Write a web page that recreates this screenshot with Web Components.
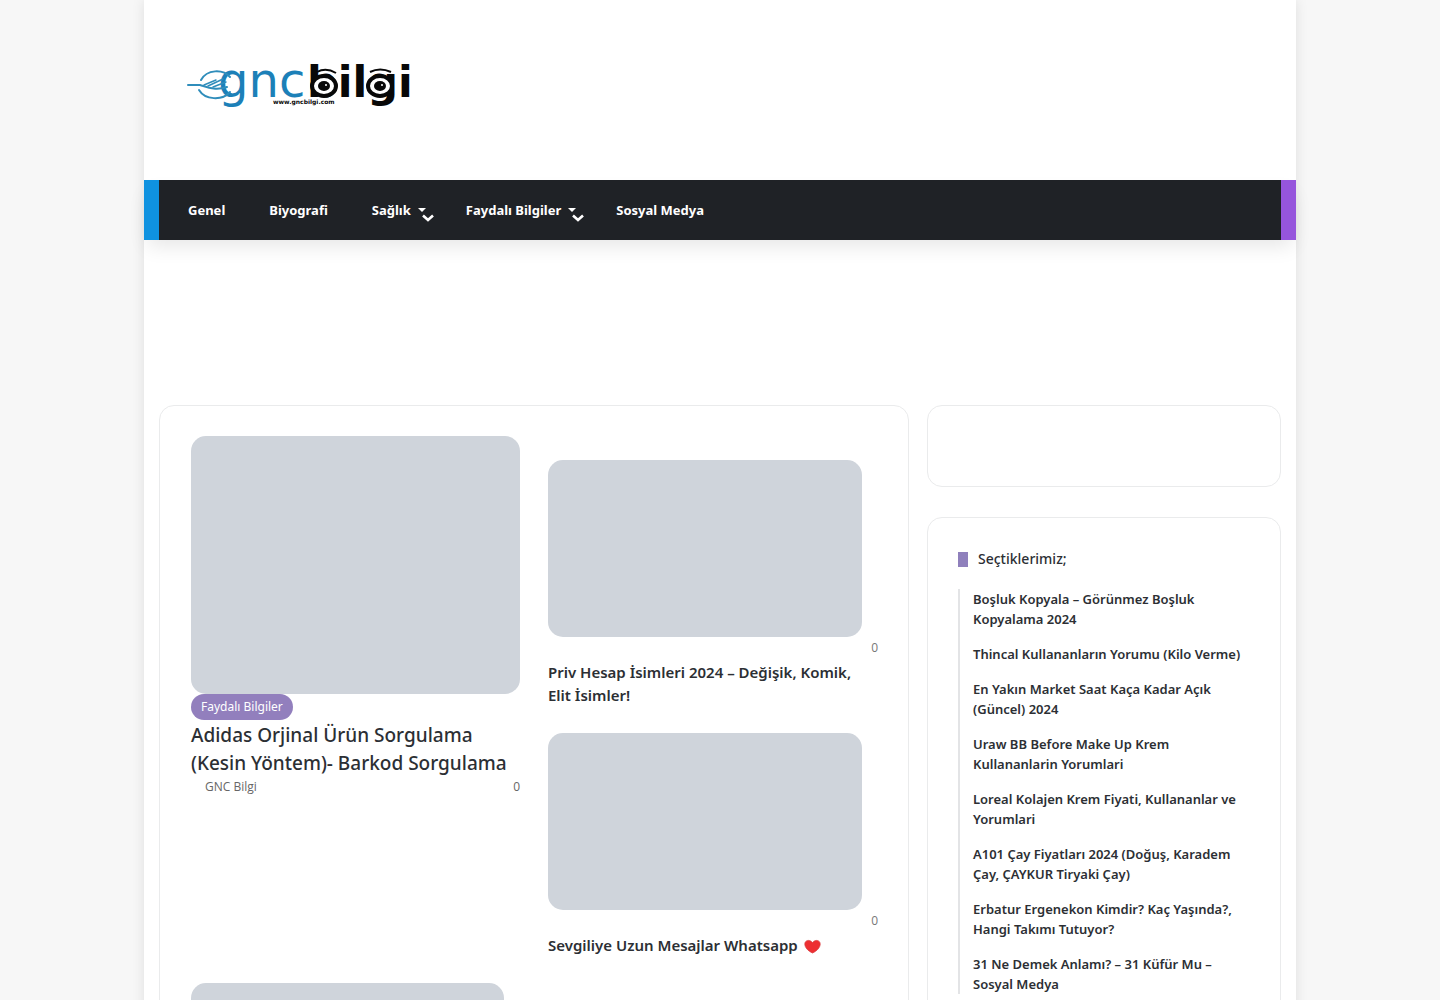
<!DOCTYPE html>
<html lang="tr">
<head>
<meta charset="utf-8">
<title>GNC Bilgi</title>
<style>
body{margin:0;background:#f7f7f7;color:#2c2f34;font-family:"Noto Sans","Open Sans",sans-serif;font-size:13px}
</style>
</head>
<body>
<site-shell>
  <site-header slot="header"></site-header>
  <site-nav slot="nav">
    <nav-item href="#genel">Genel</nav-item>
    <nav-item href="#biyografi">Biyografi</nav-item>
    <nav-item href="#saglik" menu>Sağlık</nav-item>
    <nav-item href="#faydali" menu>Faydalı Bilgiler</nav-item>
    <nav-item href="#sosyal">Sosyal Medya</nav-item>
  </site-nav>
  <content-card>
    <post-grid>
      <feature-post category="Faydalı Bilgiler" author="GNC Bilgi" comments="0">Adidas Orjinal Ürün Sorgulama (Kesin Yöntem)- Barkod Sorgulama</feature-post>
      <post-item comments="0">Priv Hesap İsimleri 2024 – Değişik, Komik, Elit İsimler!</post-item>
      <post-item comments="0">Sevgiliye Uzun Mesajlar Whatsapp <heart-icon></heart-icon></post-item>
      <post-item></post-item>
    </post-grid>
  </content-card>
  <content-card slot="aside" class="slim"></content-card>
  <content-card slot="aside" class="grow">
    <picks-list heading="Seçtiklerimiz;">
      <pick-item>Boşluk Kopyala – Görünmez Boşluk Kopyalama 2024</pick-item>
      <pick-item>Thincal Kullananların Yorumu (Kilo Verme)</pick-item>
      <pick-item>En Yakın Market Saat Kaça Kadar Açık (Güncel) 2024</pick-item>
      <pick-item>Uraw BB Before Make Up Krem Kullananlarin Yorumlari</pick-item>
      <pick-item>Loreal Kolajen Krem Fiyati, Kullananlar ve Yorumlari</pick-item>
      <pick-item>A101 Çay Fiyatları 2024 (Doğuş, Karadem Çay, ÇAYKUR Tiryaki Çay)</pick-item>
      <pick-item>Erbatur Ergenekon Kimdir? Kaç Yaşında?, Hangi Takımı Tutuyor?</pick-item>
      <pick-item>31 Ne Demek Anlamı? – 31 Küfür Mu – Sosyal Medya</pick-item>
    </picks-list>
  </content-card>
</site-shell>
<script>
function define(name, render) {
  customElements.define(name, class extends HTMLElement {
    connectedCallback() {
      if (this.shadowRoot) return;
      this.attachShadow({ mode: 'open' }).innerHTML = '<style>*{box-sizing:border-box}a{color:inherit;text-decoration:none}</style>' + render(this);
    }
  });
}

define('site-shell', () => `
<style>
:host{display:block;width:80%;margin:0 auto;background:#fff;box-shadow:0 0 12px rgba(0,0,0,.1)}
.ad{height:165px}
.cols{display:flex;gap:18px;padding:0 15px 30px}
main{flex:1;min-width:0;display:flex;flex-direction:column}
aside{width:354px;display:flex;flex-direction:column;gap:30px}
main ::slotted(*){flex:1}
::slotted(.slim){min-height:82px}
::slotted(.grow){flex:1}
</style>
<slot name="header"></slot>
<slot name="nav"></slot>
<div class="ad"></div>
<div class="cols"><main><slot></slot></main><aside><slot name="aside"></slot></aside></div>`);

define('site-header', () => `
<style>
:host{display:flex;align-items:center;height:180px;padding:0 43px;box-sizing:border-box}
a{display:block}
svg{display:block}
text{font-family:"DejaVu Sans",sans-serif}
</style>
<a href="#home" aria-label="GNC Bilgi">
<svg width="240" height="90" viewBox="0 -20 240 90">
  <text x="31" y="32" font-size="48" fill="#1c80b8">gnc</text>
  <text x="120" y="32" font-size="43" font-weight="700" fill="#080808">bilgi</text>
  <g fill="none" stroke="#2f8dbb" stroke-linecap="round">
    <path d="M14 15C20 4 36 4 43 12" stroke-width="2"/>
    <path d="M12 25C18 35 35 36 43 27" stroke-width="2"/>
    <path d="M1 20H13C20 22 28 26 40 22" stroke-width="2"/>
    <path d="M17 20L29 15M21 21L36 14M26 22L39 17" stroke-width="1.500"/>
  </g>
  <g fill="#fff" stroke="#080808" stroke-width="4">
    <ellipse cx="137" cy="21" rx="12" ry="10"/>
    <ellipse cx="193" cy="21" rx="12" ry="10"/>
  </g>
  <g fill="none" stroke="#080808" stroke-width="2">
    <path d="M130 7Q139 2 149 8"/>
    <path d="M183 7Q193 2 204 7"/>
  </g>
  <g fill="#080808">
    <ellipse cx="137" cy="21" rx="6" ry="5"/>
    <ellipse cx="193" cy="21" rx="6" ry="5"/>
  </g>
  <circle cx="139" cy="20" r="1" fill="#fff"/>
  <circle cx="195" cy="20" r="1" fill="#fff"/>
  <text x="86" y="39" font-size="6" font-weight="700" fill="#080808">www.gncbilgi.com</text>
</svg></a>`);

define('site-nav', () => `
<style>
:host{display:block}
nav{display:flex;align-items:center;gap:44px;height:60px;padding:0 29px;background:#1f2226;border:solid #0f92e0;border-width:0 15px;border-right-color:#9655dc;box-shadow:0 10px 20px -4px rgba(0,0,0,.1)}
</style>
<nav><slot></slot></nav>`);

define('nav-item', el => `
<style>
:host{display:block;position:relative;color:#fff;font-size:13px;font-weight:700;line-height:20px}
a{display:flex;align-items:center;gap:7px}
i{border:4px solid transparent;border-top-color:#fff;border-bottom:0}
button{position:absolute;right:-8px;top:13px;width:12px;height:10px;padding:0;border:0;background:none}
:host([menu]){margin-right:-4px}
svg{display:block}
</style>
<a href="${el.getAttribute('href')}"><slot></slot>${el.hasAttribute('menu') ? '<i></i>' : ''}</a>
${el.hasAttribute('menu') ? '<button aria-label="Alt menü"><svg width="12" height="10" viewBox="0 0 12 10"><path d="M1 2.500L6 7L11 2.500" fill="none" stroke="#fff" stroke-width="2.600"/></svg></button>' : ''}`);

define('content-card', () => `
<style>
:host{display:block;box-sizing:border-box;border:1px solid #eaebec;border-radius:15px;padding:30px;background:#fff}
</style>
<slot></slot>`);

define('post-grid', () => `
<style>
:host{display:grid;grid-template-columns:329fr 330fr;column-gap:28px;padding-left:1px}
::slotted(feature-post){grid-row:span 2}
</style>
<slot></slot>`);

define('feature-post', el => `
<style>
:host{display:block}
.pic{display:block;height:258px;border-radius:15px;background:#cfd4db}
.cat{display:table;padding:0 10px;border-radius:13px;background:#927fbd;color:#fff;font-size:12px;line-height:26px}
h2{margin:1px 0 0;font-size:19px;font-weight:500;line-height:28px}
.meta{display:flex;justify-content:space-between;padding-left:14px;color:#666;font-family:"Open Sans",sans-serif;font-size:12px;line-height:20px}
</style>
<a class="pic" href="#post" aria-label="Adidas"></a>
<a class="cat" href="#cat">${el.getAttribute('category')}</a>
<h2><a href="#post"><slot></slot></a></h2>
<div class="meta"><a href="#author">${el.getAttribute('author')}</a><span>${el.getAttribute('comments')}</span></div>`);

define('post-item', el => `
<style>
:host{display:block;padding-bottom:26px}
:host(:nth-child(2)){padding-top:24px}
.pic{display:block;height:177px;margin-right:16px;border-radius:15px;background:#cfd4db}
.meta{color:#777;font-family:"Open Sans",sans-serif;font-size:12px;line-height:20px;text-align:right;padding-top:1px}
h3{margin:3px 16px 0 0;font-size:15px;font-weight:600;line-height:23px}
</style>
<a class="pic" href="#post" aria-label="post"></a>
${el.hasAttribute('comments') ? `<div class="meta">${el.getAttribute('comments')}</div><h3><a href="#post"><slot></slot></a></h3>` : ''}`);

define('heart-icon', () => `
<style>:host{display:inline-block;vertical-align:middle;margin-left:2px}svg{display:block}</style>
<svg width="17" height="16" viewBox="0 0 17 16"><path d="M8.500 14C4 12 .8 8.500 .8 5C.8 1 6 0 8.500 3.600C11 0 16.200 1 16.200 5C16.200 8.500 13 12 8.500 14Z" fill="#ed2f32" stroke="#d9393c" stroke-width=".7"/></svg>`);

define('picks-list', el => `
<style>
h4{display:flex;align-items:center;gap:10px;margin:0 0 19px;font-size:14px;font-weight:500;line-height:22px}
h4::before{content:"";width:10px;height:15px;background:#8f80bc}
div{display:flex;flex-direction:column;gap:15px;border-left:2px solid #e3e4e6;padding-left:13px}
</style>
<h4>${el.getAttribute('heading')}</h4><div role="list"><slot></slot></div>`);

define('pick-item', () => `
<style>:host{display:block;font-size:13px;font-weight:600;line-height:20px}</style>
<a href="#pick"><slot></slot></a>`);
</script>
</body>
</html>
